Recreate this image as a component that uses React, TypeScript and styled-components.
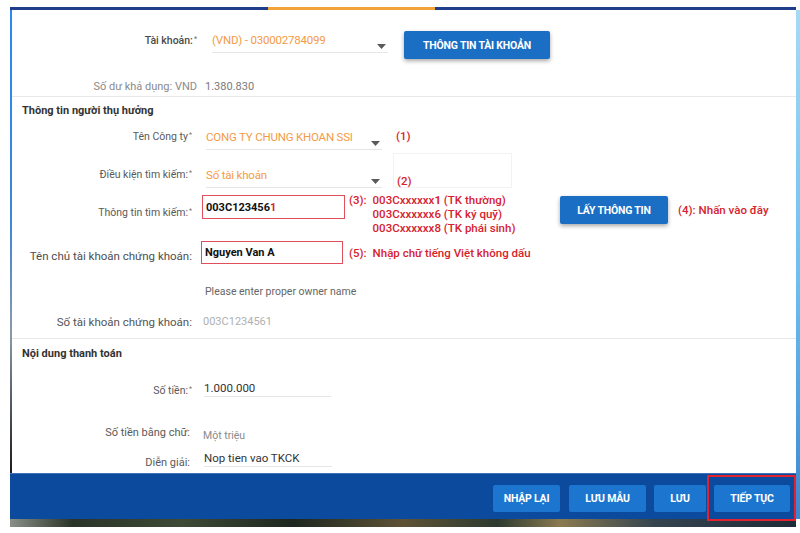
import React from 'react';
import styled, {createGlobalStyle} from 'styled-components';

const GlobalStyle = createGlobalStyle`
  html, body {
    margin: 0;
    padding: 0;
    background: #fff;
  }
  body {
    font-family: Roboto, "Liberation Sans", "Noto Sans", sans-serif;
  }
  * {
    box-sizing: border-box;
  }
`;

const StyledPage = styled.div`
  width: 800px;
  height: 533px;
  overflow: hidden;
  background: #fff;
  padding: 7px 0 0 10px;
  display: flex;
`;

const StyledMain = styled.div`
  flex: 1;
  display: flex;
  flex-direction: column;
`;

const StyledSideStrip = styled.div`
  width: 4px;
  height: 509px;
  margin-top: 3px;
  background: linear-gradient(180deg, #a6d9f6, #6cbdee 55%, #3a86cf);
`;

const StyledTopLine = styled.div`
  height: 3px;
  background: linear-gradient(90deg, #1f3d8a 0, #1f3d8a 258px, #f2a23a 258px, #f2a23a 425px, #1f3d8a 425px);
`;

const StyledPanel = styled.div`
  height: 463px;
  background: #fff;
  border-left: 2px solid;
  border-image: linear-gradient(180deg, #2a88ee 0%, #3b86d8 45%, #8a99aa 70%, #1a1a1a 100%) 1;
  display: flex;
  flex-direction: column;
  overflow: hidden;
`;

const StyledSection = styled.div<{$height: number; $divider?: boolean}>`
  height: ${p => p.$height}px;
  flex-shrink: 0;
  border-bottom: ${p => (p.$divider ? '1px solid #e8e8e8' : 'none')};
`;

const StyledRow = styled.div<{$height: number; $gap?: number}>`
  height: ${p => p.$height}px;
  display: flex;
  align-items: flex-start;
  gap: ${p => p.$gap ?? 12}px;
`;

const StyledTitle = styled.div<{$top: number}>`
  margin-top: ${p => p.$top}px;
  padding-left: 10px;
  font-size: 11px;
  line-height: 18px;
  font-weight: 700;
  color: #333;
`;

const StyledLabel = styled.div<{$w?: number; $top?: number; $size?: number; $tone?: string; $bold?: boolean}>`
  width: ${p => p.$w ?? 180}px;
  flex-shrink: 0;
  margin-top: ${p => p.$top ?? 0}px;
  text-align: right;
  font-size: ${p => p.$size ?? 10.5}px;
  font-weight: ${p => (p.$bold ? 500 : 400)};
  line-height: 18px;
  color: ${p => p.$tone ?? '#5a5a5a'};
  white-space: nowrap;
  > sup {
    font-size: 7px;
    line-height: 0;
    vertical-align: 3px;
    margin-left: 1px;
    color: #777;
  }
`;

const StyledText = styled.div<{$top?: number; $size?: number; $tone?: string}>`
  margin-top: ${p => p.$top ?? 0}px;
  font-size: ${p => p.$size ?? 11}px;
  line-height: 18px;
  color: ${p => p.$tone ?? '#888'};
  white-space: nowrap;
`;

const StyledSelect = styled.div<{$w: number; $top: number}>`
  width: ${p => p.$w}px;
  height: 22px;
  margin-top: ${p => p.$top}px;
  flex-shrink: 0;
  display: flex;
  justify-content: space-between;
  align-items: flex-end;
  padding: 0 2px 3px 0;
  border-bottom: 1px solid #e6e6e6;
  > span {
    align-self: flex-start;
    font-size: 11.5px;
    line-height: 18px;
    letter-spacing: -0.2px;
    color: #f39b45;
    white-space: nowrap;
  }
`;

const StyledLineInput = styled.div<{$w: number; $top: number; $tone?: string}>`
  width: ${p => p.$w}px;
  margin-top: ${p => p.$top}px;
  flex-shrink: 0;
  font-size: 11.5px;
  line-height: 16px;
  color: ${p => p.$tone ?? '#333'};
  border-bottom: 1px solid #e6e6e6;
  white-space: nowrap;
`;

const StyledBoxInput = styled.div<{$w: number; $h: number; $top: number}>`
  width: ${p => p.$w}px;
  height: ${p => p.$h}px;
  margin-top: ${p => p.$top}px;
  flex-shrink: 0;
  display: flex;
  align-items: center;
  padding: 0 3px;
  border: 1px solid #e0505c;
  font-size: 11px;
  font-weight: 700;
  color: #111;
  white-space: nowrap;
  > em {
    font-style: normal;
    color: #d8232e;
  }
`;

const StyledNote = styled.div<{$top?: number; $w?: number; $gap?: number}>`
  margin-top: ${p => p.$top ?? 0}px;
  width: ${p => (p.$w ? `${p.$w}px` : 'auto')};
  flex-shrink: 0;
  display: grid;
  grid-template-columns: auto auto;
  justify-content: start;
  column-gap: ${p => p.$gap ?? 6}px;
  font-size: 11.5px;
  font-weight: 500;
  line-height: 14px;
  color: #d6222e;
  white-space: nowrap;
  > ul {
    margin: 0;
    padding: 0;
    list-style: none;
  }
`;

const StyledGhostBox = styled.div`
  width: 119px;
  height: 35px;
  flex-shrink: 0;
  border: 1px solid #f1f2f3;
  padding: 20px 0 0 3px;
  font-size: 11.5px;
  font-weight: 500;
  line-height: 14px;
  color: #d6222e;
`;

const StyledButton = styled.button<{$w: number; $top?: number; $raised?: boolean}>`
  width: ${p => p.$w}px;
  height: ${p => (p.$raised ? 28 : 27)}px;
  margin-top: ${p => p.$top ?? 0}px;
  flex-shrink: 0;
  border: none;
  border-radius: 2px;
  background: ${p => (p.$raised ? '#1a6ec3' : '#1c76cf')};
  box-shadow: ${p => (p.$raised ? '0 2px 4px rgba(0,0,0,.35)' : 'none')};
  color: #fff;
  font-family: inherit;
  font-size: 10.5px;
  font-weight: 700;
  letter-spacing: -0.2px;
  white-space: nowrap;
  padding: 0;
  cursor: pointer;
`;

const StyledFooter = styled.div`
  height: 46px;
  flex-shrink: 0;
  background: #0b4a9d;
  border-top: 1px solid #3f72b8;
  display: flex;
  justify-content: flex-end;
  align-items: center;
  gap: 8px;
  padding: 3px 6px 0 0;
`;

const StyledHighlight = styled.div`
  position: relative;
  display: flex;
  &::after {
    content: '';
    position: absolute;
    top: -10px;
    bottom: -9px;
    left: -7px;
    right: -6px;
    border: 2px solid #e2222c;
    z-index: 2;
  }
`;

const StyledGround = styled.div`
  height: 8px;
  background: linear-gradient(90deg, #8a9088 0, #2a3328 8%, #3e4a36 22%, #1d261f 36%, #5e5236 50%, #2c3a2f 62%, #8a7a50 70%, #34444f 82%, #1e2b38 100%);
`;

const Caret = () => (
  <svg width="9" height="5" viewBox="0 0 9 5">
    <polygon points="0,0 9,0 4.5,5" fill="#5a5a5a"/>
  </svg>
);

const App = () => {
  return (
    <StyledPage>
      <GlobalStyle/>
      <StyledMain>
        <StyledTopLine/>
        <StyledPanel>
          <StyledSection $height={87} $divider>
            <StyledRow $height={68} $gap={15}>
              <StyledLabel $w={185} $top={22} $bold $tone="#4a4a4a">Tài khoản:<sup>*</sup></StyledLabel>
              <StyledSelect $w={176} $top={21}>
                <span>(VND) - 030002784099</span>
                <Caret/>
              </StyledSelect>
              <StyledButton $w={146} $top={21} $raised style={{marginLeft: 1}}>THÔNG TIN TÀI KHOẢN</StyledButton>
            </StyledRow>
            <StyledRow $height={18} $gap={8}>
              <StyledLabel $w={185} $tone="#8a8a8a" $size={11}>Số dư khả dụng: VND</StyledLabel>
              <StyledText $tone="#7a7a7a">1.380.830</StyledText>
            </StyledRow>
          </StyledSection>

          <StyledSection $height={242} $divider>
            <StyledRow $height={27}>
              <StyledTitle $top={5}>Thông tin người thụ hưởng</StyledTitle>
            </StyledRow>
            <StyledRow $height={29} $gap={14}>
              <StyledLabel $top={4}>Tên Công ty<sup>*</sup></StyledLabel>
              <StyledSelect $w={176} $top={4}>
                <span>CONG TY CHUNG KHOAN SSI</span>
                <Caret/>
              </StyledSelect>
              <StyledNote $top={5}><span>(1)</span></StyledNote>
            </StyledRow>
            <StyledRow $height={40} $gap={14}>
              <StyledLabel $top={13}>Điều kiện tìm kiếm:<sup>*</sup></StyledLabel>
              <StyledSelect $w={176} $top={13}>
                <span>Số tài khoản</span>
                <Caret/>
              </StyledSelect>
              <StyledGhostBox style={{marginLeft: -3}}>(2)</StyledGhostBox>
            </StyledRow>
            <StyledRow $height={44} $gap={10}>
              <StyledLabel $top={11}>Thông tin tìm kiếm:<sup>*</sup></StyledLabel>
              <StyledBoxInput $w={143} $h={24} $top={2}>003C123456<em>1</em></StyledBoxInput>
              <StyledNote $w={201} style={{marginLeft: -6}}>
                <span>(3):</span>
                <ul>
                  <li>003Cxxxxxx<b>1</b> (TK thường)</li>
                  <li>003Cxxxxxx6 (TK ký quỹ)</li>
                  <li>003Cxxxxxx8 (TK phái sinh)</li>
                </ul>
              </StyledNote>
              <StyledButton $w={108} $top={3} $raised>LẤY THÔNG TIN</StyledButton>
              <StyledNote $top={10} $gap={3}><span>(4):</span><span>Nhấn vào đây</span></StyledNote>
            </StyledRow>
            <StyledRow $height={30} $gap={9}>
              <StyledLabel $top={10} $size={11.5} $tone="#4e4e4e">Tên chủ tài khoản chứng khoán:</StyledLabel>
              <StyledBoxInput $w={142} $h={23} $top={4}>Nguyen Van A</StyledBoxInput>
              <StyledNote $top={9} style={{marginLeft: -3}}><span>(5):</span><span>Nhập chữ tiếng Việt không dấu</span></StyledNote>
            </StyledRow>
            <StyledRow $height={34} $gap={13}>
              <StyledLabel/>
              <StyledText $top={16} $size={10.5} $tone="#666">Please enter proper owner name</StyledText>
            </StyledRow>
            <StyledRow $height={37} $gap={11}>
              <StyledLabel $top={12} $size={11.5} $tone="#555">Số tài khoản chứng khoán:</StyledLabel>
              <StyledText $top={12} $size={11} $tone="#b0b0b0">003C1234561</StyledText>
            </StyledRow>
          </StyledSection>

          <StyledSection $height={134}>
            <StyledRow $height={24}>
              <StyledTitle $top={6}>Nội dung thanh toán</StyledTitle>
            </StyledRow>
            <StyledRow $height={37}>
              <StyledLabel $top={19}>Số tiền:<sup>*</sup></StyledLabel>
              <StyledLineInput $w={127} $top={17}>1.000.000</StyledLineInput>
            </StyledRow>
            <StyledRow $height={45} $gap={13}>
              <StyledLabel $w={178} $top={24} $size={11}>Số tiền bằng chữ:</StyledLabel>
              <StyledText $top={27} $size={10.5} $tone="#8a8a8a">Một triệu</StyledText>
            </StyledRow>
            <StyledRow $height={28} $gap={14}>
              <StyledLabel $w={178} $top={9} $size={11}>Diễn giải:</StyledLabel>
              <StyledLineInput $w={128} $top={5}>Nop tien vao TKCK</StyledLineInput>
            </StyledRow>
          </StyledSection>
        </StyledPanel>
        <StyledFooter>
          <StyledButton $w={67}>NHẬP LẠI</StyledButton>
          <StyledButton $w={77} style={{marginLeft: 1}}>LƯU MẪU</StyledButton>
          <StyledButton $w={52}>LƯU</StyledButton>
          <StyledHighlight>
            <StyledButton $w={76}>TIẾP TỤC</StyledButton>
          </StyledHighlight>
        </StyledFooter>
        <StyledGround/>
      </StyledMain>
      <StyledSideStrip/>
    </StyledPage>
  );
};

export default App;
